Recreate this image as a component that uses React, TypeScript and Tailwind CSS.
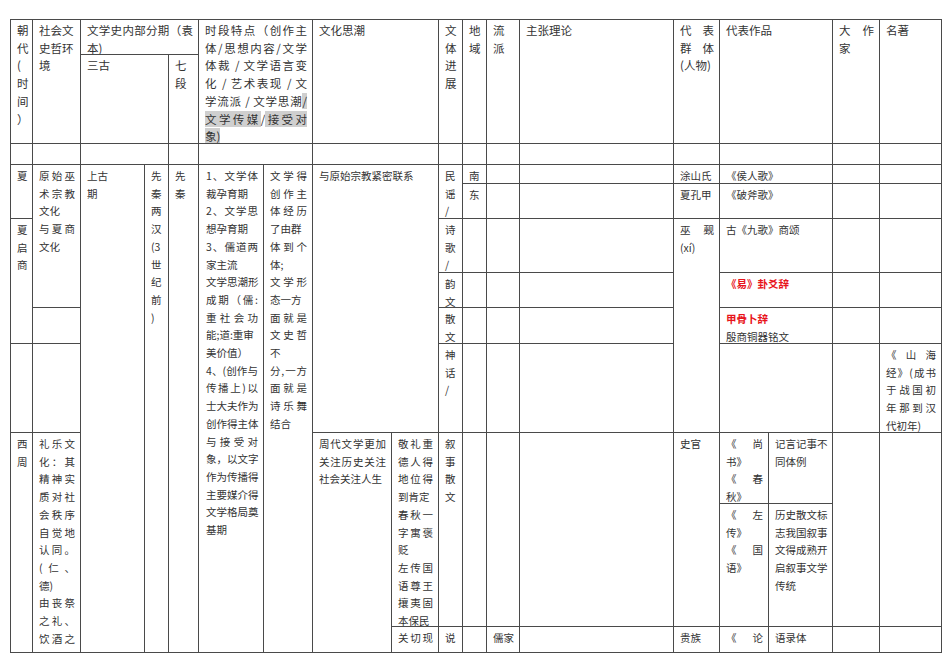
import type { ReactNode } from 'react'

function C({ className = '', children }: { className?: string; children?: ReactNode }) {
  return (
    <div className={`overflow-hidden border-r border-b border-[#4a4a4a] pl-[6px] pr-[5px] pt-[2px] ${className}`}>
      {children}
    </div>
  )
}

// "j:" prefix = justified line (Word distributes the chars across the cell)
function Lines({ items }: { items: string[] }) {
  return (
    <>
      {items.map((t, i) =>
        t.startsWith('j:') ? (
          <div key={i} className="[text-align-last:justify] whitespace-nowrap">
            {t.slice(2)}
          </div>
        ) : (
          <div key={i} className="whitespace-pre">
            {t}
          </div>
        ),
      )}
    </>
  )
}

const Hl = ({ children }: { children: ReactNode }) => <span className="bg-[#cfcfcf]">{children}</span>

export default function App() {
  return (
    <div className="min-h-[672px] bg-white pt-[19px] pl-[10px]">
      <div className="grid w-fit grid-cols-[22px_48px_64px_24px_30px_65px_49px_79px_47px_24px_24px_33px_154px_46px_49px_64px_47px_62px] grid-rows-[35px_89px_21px_19px_35px_54px_35px_36px_89px_71px_123px_26px] border-l border-t border-[#4a4a4a] font-['Noto_Sans_CJK_SC',sans-serif] text-[10.5px] leading-[17.7px] text-[#333]">
        {/* header */}
        <C className="[grid-area:1/1/3/2] text-[11.5px]">
          <Lines items={['朝', '代', '(', '时', '间', '）']} />
        </C>
        <C className="[grid-area:1/2/3/3] text-[11.5px]">
          <Lines items={['社会文', '史哲环', '境']} />
        </C>
        <C className="[grid-area:1/3/2/6] text-[11.5px]">
          <Lines items={['j:文学史内部分期（袁', '本)']} />
        </C>
        <C className="[grid-area:2/3/3/5] text-[11.5px]">三古</C>
        <C className="[grid-area:2/5/3/6] text-[11.5px]">
          <Lines items={['七', '段']} />
        </C>
        <C className="[grid-area:1/6/3/8] text-[11.5px]">
          <Lines items={['j:时段特点（创作主', 'j:体/思想内容/文学', 'j:体裁 / 文学语言变', 'j:化 / 艺术表现 / 文']} />
          <div className="[text-align-last:justify] whitespace-nowrap">
            学流派 / 文学思潮<Hl>/</Hl>
          </div>
          <div className="[text-align-last:justify] whitespace-nowrap">
            <Hl>文学传媒</Hl>/<Hl>接受对</Hl>
          </div>
          <div>
            <Hl>象)</Hl>
          </div>
        </C>
        <C className="[grid-area:1/8/3/10] text-[11.5px]">文化思潮</C>
        <C className="[grid-area:1/10/3/11] text-[11.5px]">
          <Lines items={['文', '体', '进', '展']} />
        </C>
        <C className="[grid-area:1/11/3/12] text-[11.5px]">
          <Lines items={['地', '域']} />
        </C>
        <C className="[grid-area:1/12/3/13] text-[11.5px]">
          <Lines items={['流', '派']} />
        </C>
        <C className="[grid-area:1/13/3/14] text-[11.5px]">主张理论</C>
        <C className="[grid-area:1/14/3/15] text-[11.5px]">
          <Lines items={['j:代表', 'j:群体', '(人物)']} />
        </C>
        <C className="[grid-area:1/15/3/17] text-[11.5px]">代表作品</C>
        <C className="[grid-area:1/17/3/18] text-[11.5px]">
          <Lines items={['j:大作', '家']} />
        </C>
        <C className="[grid-area:1/18/3/19] text-[11.5px]">名著</C>

        {/* empty row */}
        <C className="[grid-area:3/1/4/2]" />
        <C className="[grid-area:3/2/4/3]" />
        <C className="[grid-area:3/3/4/5]" />
        <C className="[grid-area:3/5/4/6]" />
        <C className="[grid-area:3/6/4/8]" />
        <C className="[grid-area:3/8/4/10]" />
        <C className="[grid-area:3/10/4/11]" />
        <C className="[grid-area:3/11/4/12]" />
        <C className="[grid-area:3/12/4/13]" />
        <C className="[grid-area:3/13/4/14]" />
        <C className="[grid-area:3/14/4/15]" />
        <C className="[grid-area:3/15/4/17]" />
        <C className="[grid-area:3/17/4/18]" />
        <C className="[grid-area:3/18/4/19]" />

        {/* 朝代 */}
        <C className="[grid-area:4/1/6/2]">夏</C>
        <C className="[grid-area:6/1/9/2]">
          <Lines items={['夏', '启', '商']} />
        </C>
        <C className="[grid-area:9/1/10/2]" />
        <C className="[grid-area:10/1/13/2]">
          <Lines items={['西', '周']} />
        </C>

        {/* 社会文史哲环境 */}
        <C className="[grid-area:4/2/8/3]">
          <Lines items={['j:原始巫', 'j:术宗教', '文化', 'j:与夏商', '文化']} />
        </C>
        <C className="[grid-area:8/2/9/3]" />
        <C className="[grid-area:9/2/10/3]" />
        <C className="[grid-area:10/2/13/3]">
          <Lines
            items={['j:礼乐文', 'j:化：其', 'j:精神实', 'j:质对社', 'j:会秩序', 'j:自觉地', 'j:认同。', 'j:(仁、', '德)', 'j:由丧祭', 'j:之礼、', 'j:饮酒之']}
          />
        </C>

        {/* 分期 */}
        <C className="[grid-area:4/3/13/4]">
          <Lines items={['上古', '期']} />
        </C>
        <C className="[grid-area:4/4/13/5]">
          <Lines items={['先', '秦', '两', '汉', '(3', '世', '纪', '前', ')']} />
        </C>
        <C className="[grid-area:4/5/13/6]">
          <Lines items={['先', '秦']} />
        </C>

        {/* 时段特点 */}
        <C className="[grid-area:4/6/13/7] pl-[7px]">
          <Lines
            items={[
              'j:1、文学体',
              '裁孕育期',
              'j:2、文学思',
              '想孕育期',
              'j: 3、儒道两',
              '家主流',
              '文学思潮形',
              'j:成期（儒:',
              'j:重社会功',
              '能;道:重审',
              '美价值）',
              'j:4、(创作与',
              'j:传播上)以',
              '士大夫作为',
              '创作得主体',
              'j:与接受对',
              '象，以文字',
              '作为传播得',
              '主要媒介得',
              '文学格局奠',
              '基期',
            ]}
          />
        </C>
        <C className="[grid-area:4/7/13/8]">
          <Lines
            items={['j:文学得', 'j:创作主', 'j:体经历', '了由群', 'j:体到个', '体;', 'j:文学形', '态一方', 'j:面就是', 'j:文史哲', '不', 'j:分,一方', 'j:面就是', 'j:诗乐舞', '结合']}
          />
        </C>

        {/* 文化思潮 */}
        <C className="[grid-area:4/8/10/10]">与原始宗教紧密联系</C>
        <C className="[grid-area:10/8/13/9]">
          <Lines items={['j:周代文学更加', 'j:关注历史关注', '社会关注人生']} />
        </C>
        <C className="[grid-area:10/9/12/10]">
          <Lines items={['j:敬礼重', 'j:德人得', 'j:地位得', '到肯定', 'j:春秋一', 'j:字寓褒', '贬', 'j:左传国', 'j:语尊王', 'j:攘夷固', '本保民']} />
        </C>
        <C className="[grid-area:12/9/13/10]">
          <Lines items={['j:关切现']} />
        </C>

        {/* 文体进展 */}
        <C className="[grid-area:4/10/6/11]">
          <Lines items={['民', '谣', '/']} />
        </C>
        <C className="[grid-area:6/10/7/11]">
          <Lines items={['诗', '歌', '/']} />
        </C>
        <C className="[grid-area:7/10/8/11]">
          <Lines items={['韵', '文']} />
        </C>
        <C className="[grid-area:8/10/9/11]">
          <Lines items={['散', '文']} />
        </C>
        <C className="[grid-area:9/10/10/11]">
          <Lines items={['神', '话', '/']} />
        </C>
        <C className="[grid-area:10/10/12/11]">
          <Lines items={['叙', '事', '散', '文']} />
        </C>
        <C className="[grid-area:12/10/13/11]">说</C>

        {/* 地域 */}
        <C className="[grid-area:4/11/5/12]">南</C>
        <C className="[grid-area:5/11/6/12]">东</C>
        <C className="[grid-area:6/11/7/12]" />
        <C className="[grid-area:7/11/8/12]" />
        <C className="[grid-area:8/11/9/12]" />
        <C className="[grid-area:9/11/10/12]" />
        <C className="[grid-area:10/11/12/12]" />
        <C className="[grid-area:12/11/13/12]" />

        {/* 流派 */}
        <C className="[grid-area:4/12/5/13]" />
        <C className="[grid-area:5/12/6/13]" />
        <C className="[grid-area:6/12/7/13]" />
        <C className="[grid-area:7/12/8/13]" />
        <C className="[grid-area:8/12/9/13]" />
        <C className="[grid-area:9/12/10/13]" />
        <C className="[grid-area:10/12/12/13]" />
        <C className="[grid-area:12/12/13/13]">儒家</C>

        {/* 主张理论 */}
        <C className="[grid-area:4/13/5/14]" />
        <C className="[grid-area:5/13/6/14]" />
        <C className="[grid-area:6/13/7/14]" />
        <C className="[grid-area:7/13/8/14]" />
        <C className="[grid-area:8/13/9/14]" />
        <C className="[grid-area:9/13/10/14]" />
        <C className="[grid-area:10/13/12/14]" />
        <C className="[grid-area:12/13/13/14]" />

        {/* 代表群体 */}
        <C className="[grid-area:4/14/5/15]">涂山氏</C>
        <C className="[grid-area:5/14/6/15]">夏孔甲</C>
        <C className="[grid-area:6/14/10/15]">
          <Lines items={['j:巫觋', '(xí)']} />
        </C>
        <C className="[grid-area:10/14/12/15]">史官</C>
        <C className="[grid-area:12/14/13/15]">贵族</C>

        {/* 代表作品 */}
        <C className="[grid-area:4/15/5/17]">《侯人歌》</C>
        <C className="[grid-area:5/15/6/17]">《破斧歌》</C>
        <C className="[grid-area:6/15/7/17]">古《九歌》商颂</C>
        <C className="[grid-area:7/15/8/17] font-bold text-[#e8141b]">《易》卦爻辞</C>
        <C className="[grid-area:8/15/9/17]">
          <div className="font-bold text-[#e8141b]">甲骨卜辞</div>
          <div>殷商铜器铭文</div>
        </C>
        <C className="[grid-area:9/15/10/17]" />
        <C className="[grid-area:10/15/11/16]">
          <Lines items={['j:《尚', '书》', 'j:《春', '秋》']} />
        </C>
        <C className="[grid-area:10/16/11/17]">
          <Lines items={['记言记事不', '同体例']} />
        </C>
        <C className="[grid-area:11/15/12/16]">
          <Lines items={['j:《左', '传》', 'j:《国', '语》']} />
        </C>
        <C className="[grid-area:11/16/12/17]">
          <Lines items={['历史散文标', '志我国叙事', '文得成熟开', '启叙事文学', '传统']} />
        </C>
        <C className="[grid-area:12/15/13/16]">
          <Lines items={['j:《论']} />
        </C>
        <C className="[grid-area:12/16/13/17]">语录体</C>

        {/* 大作家 */}
        <C className="[grid-area:4/17/5/18]" />
        <C className="[grid-area:5/17/6/18]" />
        <C className="[grid-area:6/17/7/18]" />
        <C className="[grid-area:7/17/8/18]" />
        <C className="[grid-area:8/17/9/18]" />
        <C className="[grid-area:9/17/10/18]" />
        <C className="[grid-area:10/17/12/18]" />
        <C className="[grid-area:12/17/13/18]" />

        {/* 名著 */}
        <C className="[grid-area:4/18/5/19]" />
        <C className="[grid-area:5/18/6/19]" />
        <C className="[grid-area:6/18/7/19]" />
        <C className="[grid-area:7/18/8/19]" />
        <C className="[grid-area:8/18/9/19]" />
        <C className="[grid-area:9/18/10/19]">
          <Lines items={['j:《山海', 'j:经》(成书', 'j:于战国初', 'j:年那到汉', '代初年)']} />
        </C>
        <C className="[grid-area:10/18/12/19]" />
        <C className="[grid-area:12/18/13/19]" />
      </div>
    </div>
  )
}
